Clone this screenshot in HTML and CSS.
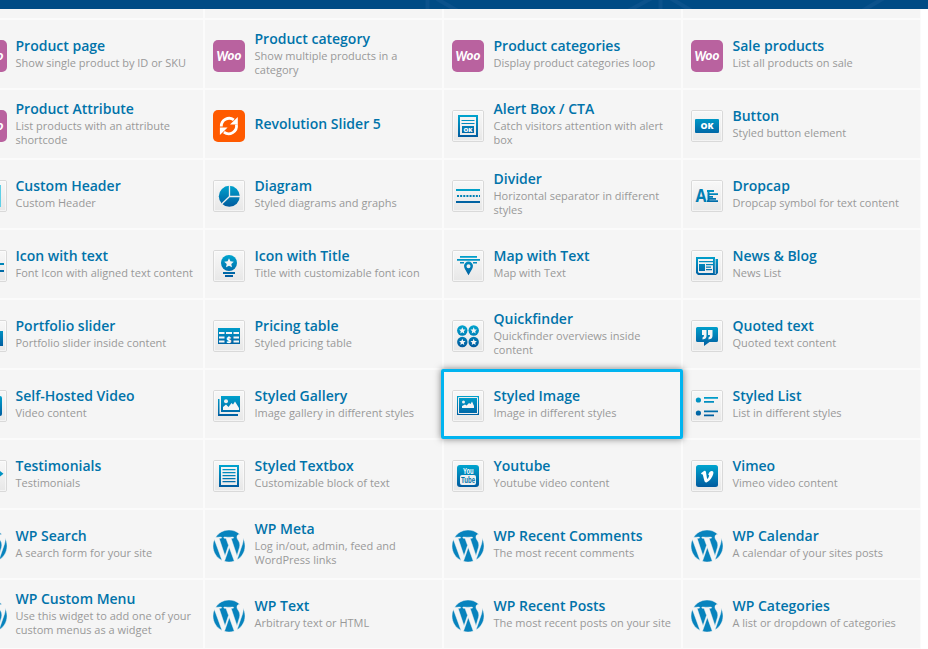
FILE: index.html
```
<!DOCTYPE html>
<html lang="en">
<head>
<meta charset="utf-8">
<title>Add element</title>
<link rel="stylesheet" href="styles.css">
</head>
<body>
<svg class="sprite" aria-hidden="true">
<defs>
<linearGradient id="g" gradientUnits="userSpaceOnUse" x1="0" y1="5" x2="0" y2="27"><stop offset="0" stop-color="#00a5cf"/><stop offset="1" stop-color="#005a9e"/></linearGradient>
<linearGradient id="t" x1="0" y1="0" x2="0" y2="1"><stop offset="0" stop-color="#f8f8f8"/><stop offset="1" stop-color="#e7e7e7"/></linearGradient>
<polygon id="star" points="0,-4 1.2,-1.4 4,-1.1 1.9,.8 2.5,3.6 0,2.2 -2.5,3.6 -1.9,.8 -4,-1.1 -1.2,-1.4"/>
<symbol id="tile" viewBox="0 0 32 32"><rect x=".5" y=".5" width="31" height="31" rx="1.5" fill="url(#t)" stroke="#d9d9d9"/><rect x="1.5" y="1.5" width="29" height="29" fill="none" stroke="#fff" stroke-opacity=".5"/></symbol>
<symbol id="woo" viewBox="0 0 32 32"><rect width="32" height="32" rx="5" fill="#b9629f"/><text class="woo" x="3.6" y="21" textLength="11.6" lengthAdjust="spacingAndGlyphs">W</text><text class="oo" x="14.6" y="19.8" textLength="13.8" lengthAdjust="spacingAndGlyphs">oo</text></symbol>
<symbol id="rev" viewBox="0 0 32 32"><rect width="32" height="32" rx="5" fill="#ff5a00"/><g fill="none" stroke="#fff" stroke-width="2.8"><path d="M8.3 16.5A7.9 7.9 0 0 1 20.8 9.8"/><path d="M23.4 14.5A7.9 7.9 0 0 1 10.9 22.2"/></g><path fill="#fff" d="M24.8 7V14.6H17ZM6.9 25V17.4H14.6Z"/></symbol>
<symbol id="wp" viewBox="8.7 8.7 105.1 105.1"><g fill="#0783bd" stroke="#f5f5f5" stroke-width="1.5"><path d="M8.708 61.26c0 20.802 12.089 38.779 29.619 47.298L13.258 39.872a52.354 52.354 0 0 0-4.55 21.388z"/><path d="M96.74 58.608c0-6.495-2.333-10.993-4.334-14.494-2.664-4.329-5.161-7.995-5.161-12.324 0-4.831 3.664-9.328 8.825-9.328.233 0 .454.029.681.042-9.35-8.566-21.807-13.796-35.489-13.796-18.36 0-34.513 9.42-43.91 23.688 1.233.037 2.395.063 3.382.063 5.497 0 14.006-.667 14.006-.667 2.833-.167 3.167 3.994.337 4.329 0 0-2.847.335-6.015.501L48.2 93.547l11.501-34.493-8.188-22.434c-2.83-.166-5.511-.501-5.511-.501-2.832-.166-2.5-4.496.332-4.329 0 0 8.679.667 13.843.667 5.496 0 14.006-.667 14.006-.667 2.835-.167 3.168 3.994.337 4.329 0 0-2.853.335-6.015.501l18.992 56.494 5.242-17.517c2.272-7.269 4.001-12.49 4.001-16.989z"/><path d="M62.184 65.857l-15.768 45.819a52.552 52.552 0 0 0 14.846 2.141c6.12 0 11.989-1.058 17.452-2.979a4.451 4.451 0 0 1-.374-.724z"/><path d="M107.376 36.046c.226 1.674.354 3.471.354 5.404 0 5.333-.996 11.328-3.996 18.824l-16.053 46.413c15.624-9.111 26.133-26.038 26.133-45.426.001-9.137-2.333-17.729-6.438-25.215z"/></g></symbol>
<symbol id="alert" viewBox="0 0 32 32"><use href="#tile"/><path fill="url(#g)" fill-rule="evenodd" d="M6 5H26V27H6ZM8 7V25H24V7Z"/><path fill="url(#g)" d="M9.5 10H22.5V11H9.5ZM9.5 13H22.5V14H9.5ZM10 16H22V23H10Z"/><text class="ok" x="11.5" y="21.7" textLength="9" lengthAdjust="spacingAndGlyphs" font-size="5.5">OK</text></symbol>
<symbol id="button" viewBox="0 0 32 32"><use href="#tile"/><rect x="4" y="9" width="24" height="14" rx="1" fill="url(#g)"/><text class="ok" x="9.5" y="19" textLength="13" lengthAdjust="spacingAndGlyphs" font-size="8">OK</text></symbol>
<symbol id="header" viewBox="0 0 32 32"><use href="#tile"/><path fill="#5fcfe6" d="M4 5H26V27H4Z"/><path fill="#f0f0f0" d="M6 5H25V27H6Z"/></symbol>
<symbol id="diagram" viewBox="0 0 32 32"><use href="#tile"/><circle cx="16.3" cy="16.3" r="10.5" fill="url(#g)"/><path d="M16.5 5V16.5H27M16.5 16.5L8.7 24" fill="none" stroke="#eee" stroke-width="1.3"/></symbol>
<symbol id="divider" viewBox="0 0 32 32"><use href="#tile"/><path fill="#00a0c8" d="M4 9H28V11H4Z"/><path stroke="#0082b5" stroke-width="2" stroke-dasharray="2 1.14" d="M5 16H28"/><path fill="#0062a2" d="M4 21H28V23H4Z"/></symbol>
<symbol id="dropcap" viewBox="0 0 32 32"><use href="#tile"/><text class="cap" x="4.5" y="22" textLength="11" lengthAdjust="spacingAndGlyphs">A</text><path fill="url(#g)" d="M16 10H23V12H16ZM17 13.2H27V15H17ZM17 16H22V17.8H17ZM17 18H25V19.8H17ZM16 20.3H27V22H16ZM16.5 10H18.5V22H16.5Z"/></symbol>
<symbol id="icontext" viewBox="0 0 32 32"><use href="#tile"/><path fill="#0086b8" d="M18 13H29V15H18Z"/><path fill="#006ba7" d="M18 20H29V22H18Z"/></symbol>
<symbol id="icontitle" viewBox="0 0 32 32"><use href="#tile"/><circle cx="16" cy="13" r="8" fill="url(#g)"/><use href="#star" transform="translate(16 13) scale(1.2)" fill="#f5f5f5"/><path fill="url(#g)" d="M10 22H22V24H10ZM12 25H20V27H12Z"/></symbol>
<symbol id="map" viewBox="0 0 32 32"><use href="#tile"/><path fill="url(#g)" fill-rule="evenodd" d="M8 6H25V7.7H8ZM5 9H28V10.7H5ZM8 12H12V13.5H8ZM21 12H25V13.5H21ZM16.5 25.2L12.9 19Q11 15 13.3 12.9A4.5 4.5 0 0 1 19.7 12.9Q22 15 20.1 19ZM16.5 14.2A2 2 0 1 0 16.5 18.2A2 2 0 1 0 16.5 14.2Z"/></symbol>
<symbol id="news" viewBox="0 0 32 32"><use href="#tile"/><path fill="url(#g)" fill-rule="evenodd" d="M5 7H24V9H27V23L25 25H7L5 23ZM7 9V22L8 23H22V9ZM8 11H22V12.2H8ZM8 14H14V21H8ZM15 14H22V15.2H15ZM15 16.5H20V17.7H15ZM15 19H21V20.2H15Z"/><path stroke="#eee" stroke-width=".7" d="M24.3 9V24"/></symbol>
<symbol id="portfolio" viewBox="0 0 32 32"><use href="#tile"/><path fill="url(#g)" d="M4 11H28V26H4Z"/></symbol>
<symbol id="pricing" viewBox="0 0 32 32"><use href="#tile"/><path fill="url(#g)" d="M5 8H27V24H5Z"/><path stroke="#f5f5f5" stroke-width="2" d="M6 13H11.5M13 13H19M20.5 13H26M6 17.5H11.5M20.5 17.5H26M6 21.5H11.5M20.5 21.5H26"/><text class="ok" x="13.5" y="23" font-size="8">$</text></symbol>
<symbol id="quick" viewBox="0 0 32 32"><use href="#tile"/><g fill="url(#g)"><circle cx="10.3" cy="10.5" r="5.2"/><circle cx="21.7" cy="10.5" r="5.2"/><circle cx="10.3" cy="22" r="5.2"/><circle cx="21.7" cy="22" r="5.2"/></g><g fill="#f5f5f5"><use href="#star" transform="translate(10.3 10.5) scale(.8)"/><use href="#star" transform="translate(21.7 10.5) scale(.8)"/><use href="#star" transform="translate(10.3 22) scale(.8)"/><use href="#star" transform="translate(21.7 22) scale(.8)"/></g></symbol>
<symbol id="quote" viewBox="0 0 32 32"><use href="#tile"/><path fill="url(#g)" d="M6.5 7H25.5Q27 7 27 8.5V20.5Q27 22 25.5 22H18.5L13 26V22H6.5Q5 22 5 20.5V8.5Q5 7 6.5 7Z"/><path fill="#f5f5f5" d="M11 10H15.5V16Q15.5 19 11.5 19.5V17.5Q13 17 13 15H11ZM17 10H21.5V16Q21.5 19 17.5 19.5V17.5Q19 17 19 15H17Z"/></symbol>
<symbol id="video" viewBox="0 0 32 32"><use href="#tile"/><rect x="5" y="6" width="22" height="20" rx="2" fill="url(#g)"/></symbol>
<symbol id="gallery" viewBox="0 0 32 32"><use href="#tile"/><path fill="url(#g)" d="M8 6H27V22H8ZM5 9H6.5V24H25V26H5Z"/><circle cx="13" cy="11.3" r="2" fill="#eee"/><path fill="#f5f5f5" d="M10 20V17L13 14.5L15.5 17L18.5 13L20 14.5L22 11.5L26 18V20Z"/></symbol>
<symbol id="image" viewBox="0 0 32 32"><use href="#tile"/><path fill="url(#g)" d="M5 6H27V25H5Z"/><path fill="none" stroke="#eee" d="M6.5 7.5H25.5V23.5H6.5Z"/><circle cx="11.5" cy="12" r="1.5" fill="#eee"/><path fill="#f5f5f5" d="M10 18V16L13 14.5L14.5 15.5L17 13L18.5 14L20 11.5L22 16V18Z"/></symbol>
<symbol id="list" viewBox="0 0 32 32"><use href="#tile"/><g fill="url(#g)"><circle cx="7.4" cy="10" r="2.6"/><circle cx="7.4" cy="23" r="2.6"/><path d="M13 7H27V8.7H13ZM13 11H23V12.7H13ZM13 20.6H27V22.2H13ZM13 24.6H23V26.2H13Z"/></g></symbol>
<symbol id="testi" viewBox="0 0 32 32"><use href="#tile"/><path fill="#0093c2" d="M20 12.5H25V11L28.5 13.7L25 16.5V15H20Z"/></symbol>
<symbol id="textbox" viewBox="0 0 32 32"><use href="#tile"/><path fill="url(#g)" fill-rule="evenodd" d="M6 5H26V27H6ZM8 7V25H24V7Z"/><path fill="url(#g)" d="M9.5 9H22.5V10.3H9.5ZM9.5 12H22.5V13.3H9.5ZM9.5 15H22.5V16.3H9.5ZM9.5 18H22.5V19.3H9.5ZM9.5 21H22.5V22.3H9.5Z"/></symbol>
<symbol id="youtube" viewBox="0 0 32 32"><use href="#tile"/><rect x="5" y="5" width="22" height="22" rx="3" fill="url(#g)"/><text class="yt" x="11" y="13.5" textLength="10.5" lengthAdjust="spacingAndGlyphs">You</text><rect x="8" y="15" width="16" height="10" rx="2" fill="#f0f0f0"/><text class="yt tube" x="9" y="23.3" textLength="14" lengthAdjust="spacingAndGlyphs">Tube</text></symbol>
<symbol id="vimeo" viewBox="0 0 32 32"><use href="#tile"/><rect x="5" y="5" width="22" height="22" rx="2.5" fill="url(#g)"/><path fill="#fff" d="M10 13.3L13 11Q14.6 10.3 15 12.2L16 18.2Q16.4 19.6 17.6 17.2Q19 14.8 17.2 15.1Q18.2 11 21 11.1Q23.7 11.6 21.4 16.2Q18.8 21.2 15.4 22.4Q13.7 22.6 13.2 20.2L11.9 14.9Q11.6 13.8 10.6 14.3Z"/></symbol>
</defs>
</svg>
<header class="banner">
<svg width="928" height="9"><path d="M427.5 0V9M660.5 0V9M437 -1L458 11M628 11L652 -2M670 -2L692 11M862 11L884 -2" stroke="#0b528c" stroke-width="4"/></svg>
</header>
<main class="elements">
<div class="cell"></div><div class="cell"></div><div class="cell"></div><div class="cell"></div>

<div class="cell"><svg class="icon"><use href="#woo"/></svg><div class="label"><h3>Product page</h3><p>Show single product by ID or SKU</p></div></div>
<div class="cell"><svg class="icon"><use href="#woo"/></svg><div class="label"><h3>Product category</h3><p>Show multiple products in a category</p></div></div>
<div class="cell"><svg class="icon"><use href="#woo"/></svg><div class="label"><h3>Product categories</h3><p>Display product categories loop</p></div></div>
<div class="cell"><svg class="icon"><use href="#woo"/></svg><div class="label"><h3>Sale products</h3><p>List all products on sale</p></div></div>

<div class="cell"><svg class="icon"><use href="#woo"/></svg><div class="label"><h3>Product Attribute</h3><p>List products with an attribute shortcode</p></div></div>
<div class="cell"><svg class="icon"><use href="#rev"/></svg><div class="label"><h3>Revolution Slider 5</h3></div></div>
<div class="cell"><svg class="icon"><use href="#alert"/></svg><div class="label"><h3>Alert Box / CTA</h3><p>Catch visitors attention with alert box</p></div></div>
<div class="cell"><svg class="icon"><use href="#button"/></svg><div class="label"><h3>Button</h3><p>Styled button element</p></div></div>

<div class="cell"><svg class="icon"><use href="#header"/></svg><div class="label"><h3>Custom Header</h3><p>Custom Header</p></div></div>
<div class="cell"><svg class="icon"><use href="#diagram"/></svg><div class="label"><h3>Diagram</h3><p>Styled diagrams and graphs</p></div></div>
<div class="cell"><svg class="icon"><use href="#divider"/></svg><div class="label"><h3>Divider</h3><p>Horizontal separator in different styles</p></div></div>
<div class="cell"><svg class="icon"><use href="#dropcap"/></svg><div class="label"><h3>Dropcap</h3><p>Dropcap symbol for text content</p></div></div>

<div class="cell"><svg class="icon"><use href="#icontext"/></svg><div class="label"><h3>Icon with text</h3><p>Font Icon with aligned text content</p></div></div>
<div class="cell"><svg class="icon"><use href="#icontitle"/></svg><div class="label"><h3>Icon with Title</h3><p>Title with customizable font icon</p></div></div>
<div class="cell"><svg class="icon"><use href="#map"/></svg><div class="label"><h3>Map with Text</h3><p>Map with Text</p></div></div>
<div class="cell"><svg class="icon"><use href="#news"/></svg><div class="label"><h3>News &amp; Blog</h3><p>News List</p></div></div>

<div class="cell"><svg class="icon"><use href="#portfolio"/></svg><div class="label"><h3>Portfolio slider</h3><p>Portfolio slider inside content</p></div></div>
<div class="cell"><svg class="icon"><use href="#pricing"/></svg><div class="label"><h3>Pricing table</h3><p>Styled pricing table</p></div></div>
<div class="cell"><svg class="icon"><use href="#quick"/></svg><div class="label"><h3>Quickfinder</h3><p>Quickfinder overviews inside content</p></div></div>
<div class="cell"><svg class="icon"><use href="#quote"/></svg><div class="label"><h3>Quoted text</h3><p>Quoted text content</p></div></div>

<div class="cell"><svg class="icon"><use href="#video"/></svg><div class="label"><h3>Self-Hosted Video</h3><p>Video content</p></div></div>
<div class="cell"><svg class="icon"><use href="#gallery"/></svg><div class="label"><h3>Styled Gallery</h3><p>Image gallery in different styles</p></div></div>
<div class="cell selected"><svg class="icon"><use href="#image"/></svg><div class="label"><h3>Styled Image</h3><p>Image in different styles</p></div></div>
<div class="cell"><svg class="icon"><use href="#list"/></svg><div class="label"><h3>Styled List</h3><p>List in different styles</p></div></div>

<div class="cell"><svg class="icon"><use href="#testi"/></svg><div class="label"><h3>Testimonials</h3><p>Testimonials</p></div></div>
<div class="cell"><svg class="icon"><use href="#textbox"/></svg><div class="label"><h3>Styled Textbox</h3><p>Customizable block of text</p></div></div>
<div class="cell"><svg class="icon"><use href="#youtube"/></svg><div class="label"><h3>Youtube</h3><p>Youtube video content</p></div></div>
<div class="cell"><svg class="icon"><use href="#vimeo"/></svg><div class="label"><h3>Vimeo</h3><p>Vimeo video content</p></div></div>

<div class="cell"><svg class="icon"><use href="#wp"/></svg><div class="label"><h3>WP Search</h3><p>A search form for your site</p></div></div>
<div class="cell"><svg class="icon"><use href="#wp"/></svg><div class="label"><h3>WP Meta</h3><p>Log in/out, admin, feed and WordPress links</p></div></div>
<div class="cell"><svg class="icon"><use href="#wp"/></svg><div class="label"><h3>WP Recent Comments</h3><p>The most recent comments</p></div></div>
<div class="cell"><svg class="icon"><use href="#wp"/></svg><div class="label"><h3>WP Calendar</h3><p>A calendar of your sites posts</p></div></div>

<div class="cell"><svg class="icon"><use href="#wp"/></svg><div class="label"><h3>WP Custom Menu</h3><p>Use this widget to add one of your custom menus as a widget</p></div></div>
<div class="cell"><svg class="icon"><use href="#wp"/></svg><div class="label"><h3>WP Text</h3><p>Arbitrary text or HTML</p></div></div>
<div class="cell"><svg class="icon"><use href="#wp"/></svg><div class="label"><h3>WP Recent Posts</h3><p>The most recent posts on your site</p></div></div>
<div class="cell"><svg class="icon"><use href="#wp"/></svg><div class="label"><h3>WP Categories</h3><p>A list or dropdown of categories</p></div></div>
</main>
</body>
</html>
```
FILE: styles.css
```
html, body {
  margin: 0;
  height: 649px;
  overflow: hidden;
  background: #fff;
  font-family: "Open Sans", sans-serif;
}
.sprite {
  display: block;
  width: 0;
  height: 0;
}
.banner {
  height: 9px;
  background: #004b85;
  overflow: hidden;
}
.banner svg {
  display: block;
}
.elements {
  display: grid;
  grid-template-columns: repeat(4, 237px);
  grid-template-rows: 9px repeat(9, 68px);
  gap: 2px;
  width: 954px;
  margin-left: -34px;
  padding: 0 1px 1px 0;
  background: #fbfbfb;
}
.cell {
  position: relative;
  display: flex;
  align-items: center;
  gap: 9.5px;
  padding: 0 8px;
  background: #f5f5f5;
}
.icon {
  flex: none;
  width: 32px;
  height: 32px;
  margin-top: 4px;
}
.cell:nth-child(4n + 1) {
  gap: 8.5px;
  padding-left: 9px;
}
h3 {
  margin: 0;
  font-size: 14px;
  line-height: 18px;
  font-weight: 600;
  color: #0073aa;
}
p {
  margin: 1px 0;
  font-size: 11px;
  line-height: 14px;
  color: #999;
}
.selected {
  z-index: 1;
}
.selected::after {
  content: "";
  position: absolute;
  inset: -1px -2px -1px -3px;
  border: 3px solid #00b4f0;
  border-radius: 2px;
  box-shadow: 0 0 7px rgba(0, 0, 0, .5);
}
.ok, .cap {
  font-family: "Open Sans", sans-serif;
  font-weight: 800;
  fill: #fff;
}
.woo, .oo {
  font: italic 900 13.5px Lato, sans-serif;
  fill: #fff;
}
.oo {
  font-size: 13px;
}
.cap {
  font-size: 17px;
  font-weight: 700;
  fill: #007fb4;
}
.yt {
  font: 700 9px "Liberation Sans", sans-serif;
  fill: #fff;
}
.tube {
  fill: #0073aa;
}
```
